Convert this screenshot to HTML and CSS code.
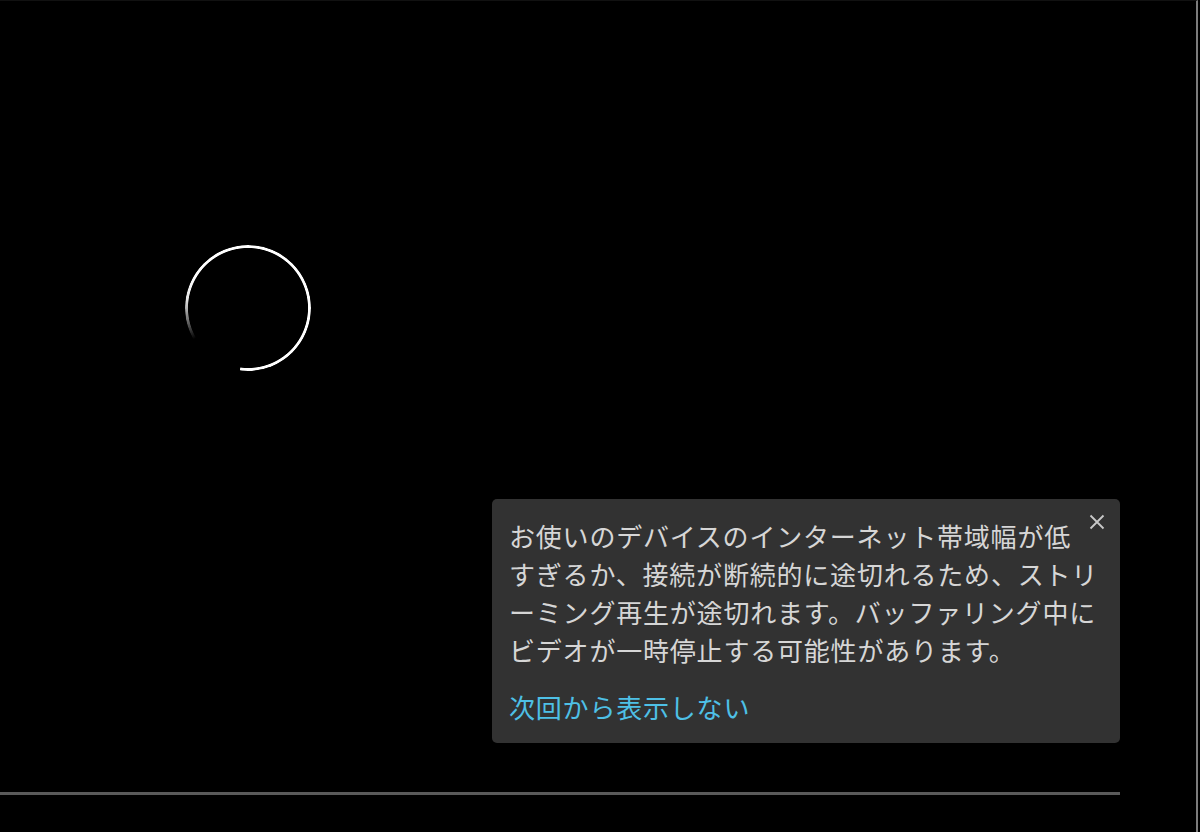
FILE: index.html
```html
<!DOCTYPE html>
<html lang="ja">
<head>
<meta charset="utf-8">
<title>Player</title>
<link rel="stylesheet" href="styles.css">
</head>
<body>
<div class="player">
  <div class="stage">
    <div class="spinner"></div>
    <div class="toast">
      <button class="close" aria-label="閉じる">
        <svg viewBox="0 0 18 18" width="18" height="18"><path d="M2.5 2.5 L15.5 15.5 M15.5 2.5 L2.5 15.5" stroke="#c8c8c8" stroke-width="1.8" fill="none"/></svg>
      </button>
      <p class="msg">お使いのデバイスのインターネット帯域幅が低<br>すぎるか、接続が断続的に途切れるため、ストリ<br>ーミング再生が途切れます。バッファリング中に<br>ビデオが一時停止する可能性があります。</p>
      <a class="link" href="#">次回から表示しない</a>
    </div>
  </div>
  <div class="progress"></div>
</div>
</body>
</html>
```

FILE: styles.css
```css
html, body {
  margin: 0;
  padding: 0;
  background: #000;
}
.player {
  width: 1198px;
  height: 832px;
  border-right: 2px solid #7c7c7c;
  border-top: 1px solid #111;
  box-sizing: border-box;
  display: flex;
  flex-direction: column;
  background: #000;
}
.stage {
  position: relative;
  flex: 1;
}
.spinner {
  position: absolute;
  left: 185px;
  top: 244px;
  width: 126px;
  height: 126px;
  border-radius: 50%;
  background: conic-gradient(from 240deg, rgba(255,255,255,0) 0deg, rgba(255,255,255,0.9) 38deg, #fff 60deg, #fff 307deg, rgba(255,255,255,0) 307.5deg);
  -webkit-mask: radial-gradient(farthest-side, transparent calc(100% - 3.4px), #000 calc(100% - 2.6px));
  mask: radial-gradient(farthest-side, transparent calc(100% - 3.4px), #000 calc(100% - 2.6px));
}
.toast {
  position: absolute;
  left: 492px;
  top: 498px;
  width: 628px;
  height: 244px;
  box-sizing: border-box;
  padding: 18px 17px 16px 17px;
  background: #323232;
  border-radius: 5px;
  font-family: "Noto Sans CJK JP", "Noto Sans", sans-serif;
}
.msg {
  margin: 0;
  font-size: 26px;
  line-height: 38px;
  letter-spacing: 0.8px;
  color: #d6d6d6;
  white-space: nowrap;
}
.link {
  display: block;
  margin-top: 19px;
  font-size: 26px;
  line-height: 38px;
  letter-spacing: 0.8px;
  color: #4ec0e6;
  text-decoration: none;
}
.close {
  position: absolute;
  right: 14px;
  top: 14px;
  width: 18px;
  height: 18px;
  padding: 0;
  border: 0;
  background: none;
  display: flex;
}
.progress {
  height: 3px;
  width: 1120px;
  background: #5a5a5a;
  margin-bottom: 37px;
}
```
